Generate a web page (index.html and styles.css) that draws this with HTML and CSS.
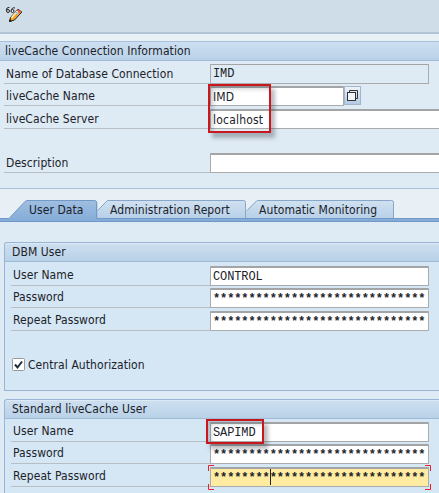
FILE: index.html
```html
<!DOCTYPE html>
<html lang="en">
<head>
<meta charset="utf-8">
<title>liveCache Connection</title>
<link rel="stylesheet" href="styles.css">
</head>
<body>
<header class="toolbar">
  <svg class="edit-icon" width="18" height="18" viewBox="0 0 18 18">
    <path d="M1.500 4.500C1 2.500 2.500 1.200 4.500 1.500M6.800 4C6.500 2.500 8 1.200 10 2" fill="none" stroke="#222" stroke-width="1"/>
    <circle cx="3" cy="5" r="1.500" fill="#dce6ed" stroke="#222"/>
    <circle cx="7.500" cy="5" r="1.500" fill="#dce6ed" stroke="#222"/>
    <path d="M4.500 15.500L5.500 11.500L13 3.200L16.800 6L9.500 14Z" fill="#f5a323" stroke="#222"/>
    <path d="M6.500 11.700L12.500 5" stroke="#fff1bd" stroke-width="1.700"/>
    <path d="M12 4.500L13.300 3.600L16 5.700L14.600 7.300Z" fill="#e65d5a"/>
    <path d="M11.300 5.500L13.800 7.700L12.700 8.900L10.300 6.800Z" fill="#a9bee8"/>
    <path d="M4 16L4.800 13.200L7 15.300Z" fill="#161616"/>
  </svg>
</header>
<section class="connection">
  <h2 class="title">liveCache Connection Information</h2>
  <div class="rows">
    <div class="row"><label>Name of Database Connection</label><div class="field mono readonly">IMD</div></div>
    <div class="row"><label>liveCache Name</label><div class="field short">IMD</div><button class="pick" aria-label="Select"><svg width="14" height="14" viewBox="0 0 14 14"><path d="M4.500 3.500V1.500H12.500V9.500H10.500" fill="none" stroke="#333"/><rect x="2.500" y="3.500" width="8" height="8" fill="#f4f7fa" stroke="#333"/></svg></button></div>
    <div class="row"><label>liveCache Server</label><div class="field wide">localhost</div></div>
    <div class="row"></div>
    <div class="row"><label>Description</label><div class="field wide"></div></div>
    <div class="mark mark-names"></div>
  </div>
</section>
<nav class="tabs">
  <svg class="tab-shapes" width="439" height="33" viewBox="0 0 439 33">
    <defs>
      <linearGradient id="on" x2="0" y2="1"><stop stop-color="#9fbfe1"/><stop offset="1" stop-color="#84abd8"/></linearGradient>
      <linearGradient id="off" x2="0" y2="1"><stop stop-color="#d0e1f0"/><stop offset="1" stop-color="#b8d0e8"/></linearGradient>
    </defs>
    <path d="M246 29.500V21.500L257 11.500H392Q394 11.500 394 14V29.500Z" fill="url(#off)"/>
    <path d="M247 21.500L257 11.500H391.500Q393.500 11.500 393.500 13.500V29" fill="none" stroke="#87a6c8"/>
    <path d="M97.500 29V21.500L107.500 11.500H243.500Q245.500 11.500 245.500 13.500V29Z" fill="url(#off)"/>
    <path d="M97.500 21.500L107.500 11.500H243.500Q245.500 11.500 245.500 13.500V29" fill="none" stroke="#87a6c8"/>
    <path d="M0 29.500H9L25 12.500Q26 11.500 28 11.500H95Q97.500 11.500 97.500 14V29.500H439V32.500H0Z" fill="url(#on)"/>
    <path d="M0 29.500H9L25 12.500Q26 11.500 28 11.500H94.500Q96.500 11.500 96.500 13.500V29.500H439" fill="none" stroke="#7299c5"/>
    <path d="M0 32.500H439" stroke="#6f98c8"/>
  </svg>
  <span class="tab t1">User Data</span><span class="tab t2">Administration Report</span><span class="tab t3">Automatic Monitoring</span>
</nav>
<main class="content">
  <section class="panel dbm">
    <h2 class="title">DBM User</h2>
    <div class="rows">
      <div class="row"><label>User Name</label><div class="field mono">CONTROL</div></div>
      <div class="row"><label>Password</label><div class="field mono stars">******************************</div></div>
      <div class="row"><label>Repeat Password</label><div class="field mono stars">******************************</div></div>
    </div>
    <div class="check"><svg width="13" height="13" viewBox="0 0 13 13"><rect x=".5" y=".5" width="12" height="12" rx="1" fill="#fff" stroke="#999"/><path d="M3 6.500L5.500 9.500L10 3.500" fill="none" stroke="#222a3d" stroke-width="2"/></svg><span>Central Authorization</span></div>
  </section>
  <section class="panel standard">
    <h2 class="title">Standard liveCache User</h2>
    <div class="rows">
      <div class="row"><label>User Name</label><div class="field mono">SAPIMD</div></div>
      <div class="row"><label>Password</label><div class="field mono stars">******************************</div></div>
      <div class="row"><label>Repeat Password</label><div class="field mono stars focus">******************************<i class="caret"></i><svg class="corners" width="223" height="25" viewBox="0 0 223 25"><path d="M.5 6V.5H6M217 .5H222.500V6M.5 19V24.500H6M217 24.500H222.500V19" fill="none" stroke="#e82127"/></svg></div></div>
      <div class="mark mark-user"></div>
    </div>
  </section>
</main>
</body>
</html>
```
FILE: styles.css
```css
* { box-sizing: border-box; }
body {
  margin: 0;
  width: 439px;
  height: 493px;
  overflow: hidden;
  background: #deeaf4;
  color: #1b2229;
  font: 12px/18px "DejaVu Sans Condensed", "DejaVu Sans", sans-serif;
  font-stretch: condensed;
  letter-spacing: 0.08px;
  white-space: nowrap;
}
.toolbar {
  height: 34px;
  padding: 6px 0 0 5px;
  background: #cfdde8;
  border-bottom: 2px solid #b0c4d6;
}
.edit-icon, .check svg { display: block; }
.connection {
  height: 155px;
  padding-top: 7px;
  background: linear-gradient(#e9f1f7 7px, #deeaf4 7px);
  border-bottom: 1px solid #a6c1da;
}
.title {
  margin: 0;
  height: 20px;
  padding-left: 5px;
  border-top: 1px solid #a5c0db;
  border-bottom: 1px solid #a0bbd8;
  background: linear-gradient(#cddff0, #b9d1e8);
  font: inherit;
}
.rows { position: relative; }
.connection .rows { padding: 1px 0 0 4px; }
.row {
  display: flex;
  height: 22.33px;
  padding-top: 2px;
}
label {
  flex: none;
  width: 206px;
  height: 20px;
  padding-left: 2px;
  line-height: 20px;
  border-bottom: 1px solid #b9bec3;
}
.field {
  position: relative;
  flex: none;
  width: 219px;
  height: 20px;
  padding-left: 2px;
  border: 1px solid #a9abad;
  border-top: 2px solid #a2a4a6;
  border-radius: 1px;
  background: #fff;
  line-height: 18px;
}
.short { width: 134px; }
.wide { width: 250px; letter-spacing: 0.2px; }
.readonly { background: #deeaf4; border-top-width: 1px; }
.mono { font-family: "Liberation Mono", monospace; font-size: 12px; font-stretch: normal; letter-spacing: -0.12px; }
.stars { line-height: 18px; font-weight: bold; }
.pick {
  width: 17px;
  height: 19px;
  margin: 0;
  padding: 1px 0 0;
  border: 1px solid #a3b6ca;
  background: linear-gradient(#edf3f9, #b3cae4);
}
.pick svg { display: block; }
.mark {
  position: absolute;
  border: 2px solid #c9171d;
  box-shadow: 4px 5px 4px rgba(70, 80, 90, .38), inset 3px 3px 4px rgba(70, 80, 90, .28);
}
.mark-names { left: 208px; top: 23px; width: 63px; height: 49px; }
.tabs {
  position: relative;
  display: flex;
  height: 33px;
  padding-top: 12px;
  background: #e8f0f5;
}
.tab-shapes { position: absolute; left: 0; top: 0; }
.tab { position: relative; line-height: 19px; }
.t1 { width: 81px; margin-left: 29px; }
.t2 { width: 149px; }
.content {
  padding: 20px 0 0 4px;
}
.panel {
  width: 440px;
  border: 1px solid #9ab5d3;
  border-right: 0;
  border-radius: 3px 0 0 0;
  background: #d5e6f4;
}
.panel .title { height: 19px; padding-left: 7px; line-height: 17px; border-top-color: #dceaf6; border-radius: 3px 0 0 0; }
.panel .rows { padding: 2px 0 0 6px; }
.panel label { width: 199px; line-height: 19px; }
.dbm { height: 149px; }
.standard { height: 110px; margin-top: 8px; }
.standard .rows { padding-top: 1px; }
.check {
  display: flex;
  gap: 3px;
  margin: 27px 0 0 7px;
  line-height: 14px;
}
.focus { background: #ffeca0; }
.caret {
  position: absolute;
  left: 59px;
  top: 0;
  width: 1px;
  height: 16px;
  background: #222;
}
.corners { position: absolute; left: -3px; top: -4px; }
.mark-user { left: 201px; top: 0; width: 58px; height: 25px; }
```
